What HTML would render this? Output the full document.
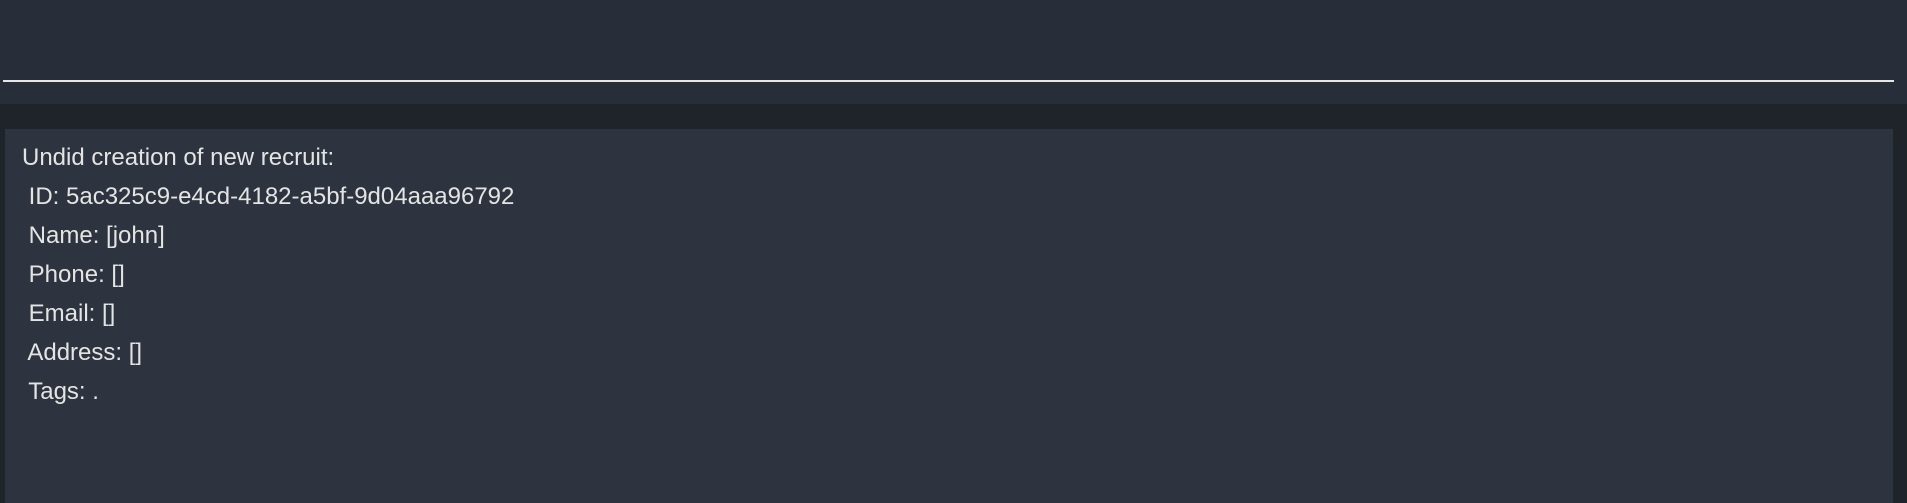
<!DOCTYPE html>
<html><head><style>
html,body{margin:0;padding:0;width:1907px;height:503px;overflow:hidden;background:#1f242b;}
.hdr{position:absolute;left:0;top:0;width:1907px;height:104px;background:#282e39;}
.line{position:absolute;left:3px;top:80px;width:1891px;height:2px;background:#e6e6e6;}
.panel{position:absolute;left:5px;top:129px;width:1888px;height:374px;background:#2d3440;}
.txt{position:absolute;left:22px;top:138px;font-family:"Liberation Sans",sans-serif;font-size:24px;line-height:39px;color:#e4e4e4;white-space:pre;}
</style></head><body>
<div class="hdr"></div><div class="line"></div>
<div class="panel"></div>
<div class="txt">Undid creation of new recruit:
 ID: 5ac325c9-e4cd-4182-a5bf-9d04aaa96792
 Name: [john]
 Phone: []
 Email: []
 Address: []
 Tags: .</div>
</body></html>
